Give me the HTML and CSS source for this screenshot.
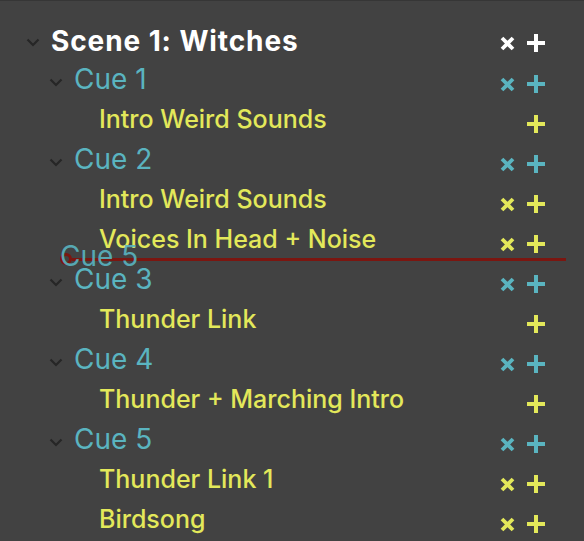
FILE: index.html
```html
<!DOCTYPE html>
<html>
<head>
<meta charset="utf-8">
<link rel="stylesheet" href="styles.css">
</head>
<body>
<div class="tree">
  <div class="row scene">
    <span class="chev"><svg width="14" height="9" viewBox="0 0 14 9"><path d="M1.5 1.5 L7 7 L12.5 1.5" fill="none" stroke="currentColor" stroke-width="2.2"/></svg></span>
    <span class="label">Scene 1: Witches</span>
    <span class="actions"><svg class="x" width="15" height="15" viewBox="0 0 15 15"><path d="M2 2 L13 13 M13 2 L2 13" stroke="currentColor" stroke-width="3.8"/></svg><svg class="p" width="18" height="18" viewBox="0 0 18 18"><path d="M9 0 V18 M0 9 H18" stroke="currentColor" stroke-width="4"/></svg></span>
  </div>

  <div class="row cue">
    <span class="chev"><svg width="14" height="9" viewBox="0 0 14 9"><path d="M1.5 1.5 L7 7 L12.5 1.5" fill="none" stroke="currentColor" stroke-width="2.2"/></svg></span>
    <span class="label">Cue 1</span>
    <span class="actions"><svg class="x" width="15" height="15" viewBox="0 0 15 15"><path d="M2 2 L13 13 M13 2 L2 13" stroke="currentColor" stroke-width="3.8"/></svg><svg class="p" width="18" height="18" viewBox="0 0 18 18"><path d="M9 0 V18 M0 9 H18" stroke="currentColor" stroke-width="4"/></svg></span>
  </div>
  <div class="row item">
    <span class="label">Intro Weird Sounds</span>
    <span class="actions"><svg class="p" width="18" height="18" viewBox="0 0 18 18"><path d="M9 0 V18 M0 9 H18" stroke="currentColor" stroke-width="4"/></svg></span>
  </div>

  <div class="row cue">
    <span class="chev"><svg width="14" height="9" viewBox="0 0 14 9"><path d="M1.5 1.5 L7 7 L12.5 1.5" fill="none" stroke="currentColor" stroke-width="2.2"/></svg></span>
    <span class="label">Cue 2</span>
    <span class="actions"><svg class="x" width="15" height="15" viewBox="0 0 15 15"><path d="M2 2 L13 13 M13 2 L2 13" stroke="currentColor" stroke-width="3.8"/></svg><svg class="p" width="18" height="18" viewBox="0 0 18 18"><path d="M9 0 V18 M0 9 H18" stroke="currentColor" stroke-width="4"/></svg></span>
  </div>
  <div class="row item">
    <span class="label">Intro Weird Sounds</span>
    <span class="actions"><svg class="x" width="15" height="15" viewBox="0 0 15 15"><path d="M2 2 L13 13 M13 2 L2 13" stroke="currentColor" stroke-width="3.8"/></svg><svg class="p" width="18" height="18" viewBox="0 0 18 18"><path d="M9 0 V18 M0 9 H18" stroke="currentColor" stroke-width="4"/></svg></span>
  </div>
  <div class="row item">
    <span class="label">Voices In Head + Noise</span>
    <span class="actions"><svg class="x" width="15" height="15" viewBox="0 0 15 15"><path d="M2 2 L13 13 M13 2 L2 13" stroke="currentColor" stroke-width="3.8"/></svg><svg class="p" width="18" height="18" viewBox="0 0 18 18"><path d="M9 0 V18 M0 9 H18" stroke="currentColor" stroke-width="4"/></svg></span>
  </div>

  <div class="row cue">
    <span class="chev"><svg width="14" height="9" viewBox="0 0 14 9"><path d="M1.5 1.5 L7 7 L12.5 1.5" fill="none" stroke="currentColor" stroke-width="2.2"/></svg></span>
    <span class="label">Cue 3</span>
    <span class="actions"><svg class="x" width="15" height="15" viewBox="0 0 15 15"><path d="M2 2 L13 13 M13 2 L2 13" stroke="currentColor" stroke-width="3.8"/></svg><svg class="p" width="18" height="18" viewBox="0 0 18 18"><path d="M9 0 V18 M0 9 H18" stroke="currentColor" stroke-width="4"/></svg></span>
  </div>
  <div class="row item">
    <span class="label">Thunder Link</span>
    <span class="actions"><svg class="p" width="18" height="18" viewBox="0 0 18 18"><path d="M9 0 V18 M0 9 H18" stroke="currentColor" stroke-width="4"/></svg></span>
  </div>

  <div class="row cue">
    <span class="chev"><svg width="14" height="9" viewBox="0 0 14 9"><path d="M1.5 1.5 L7 7 L12.5 1.5" fill="none" stroke="currentColor" stroke-width="2.2"/></svg></span>
    <span class="label">Cue 4</span>
    <span class="actions"><svg class="x" width="15" height="15" viewBox="0 0 15 15"><path d="M2 2 L13 13 M13 2 L2 13" stroke="currentColor" stroke-width="3.8"/></svg><svg class="p" width="18" height="18" viewBox="0 0 18 18"><path d="M9 0 V18 M0 9 H18" stroke="currentColor" stroke-width="4"/></svg></span>
  </div>
  <div class="row item">
    <span class="label">Thunder + Marching Intro</span>
    <span class="actions"><svg class="p" width="18" height="18" viewBox="0 0 18 18"><path d="M9 0 V18 M0 9 H18" stroke="currentColor" stroke-width="4"/></svg></span>
  </div>

  <div class="row cue">
    <span class="chev"><svg width="14" height="9" viewBox="0 0 14 9"><path d="M1.5 1.5 L7 7 L12.5 1.5" fill="none" stroke="currentColor" stroke-width="2.2"/></svg></span>
    <span class="label">Cue 5</span>
    <span class="actions"><svg class="x" width="15" height="15" viewBox="0 0 15 15"><path d="M2 2 L13 13 M13 2 L2 13" stroke="currentColor" stroke-width="3.8"/></svg><svg class="p" width="18" height="18" viewBox="0 0 18 18"><path d="M9 0 V18 M0 9 H18" stroke="currentColor" stroke-width="4"/></svg></span>
  </div>
  <div class="row item">
    <span class="label">Thunder Link 1</span>
    <span class="actions"><svg class="x" width="15" height="15" viewBox="0 0 15 15"><path d="M2 2 L13 13 M13 2 L2 13" stroke="currentColor" stroke-width="3.8"/></svg><svg class="p" width="18" height="18" viewBox="0 0 18 18"><path d="M9 0 V18 M0 9 H18" stroke="currentColor" stroke-width="4"/></svg></span>
  </div>
  <div class="row item">
    <span class="label">Birdsong</span>
    <span class="actions"><svg class="x" width="15" height="15" viewBox="0 0 15 15"><path d="M2 2 L13 13 M13 2 L2 13" stroke="currentColor" stroke-width="3.8"/></svg><svg class="p" width="18" height="18" viewBox="0 0 18 18"><path d="M9 0 V18 M0 9 H18" stroke="currentColor" stroke-width="4"/></svg></span>
  </div>

  <div class="drop-indicator"><span class="drop-dot"></span><span class="drop-line"></span></div>
  <div class="drag-ghost">Cue 5</div>
</div>
</body>
</html>
```

FILE: styles.css
```css
html, body {
  margin: 0;
  padding: 0;
  background: #424242;
  height: 100%;
}
body {
  border-top: 1px solid #363636;
  font-family: Inter, "Noto Sans", "Liberation Sans", sans-serif;
  overflow: hidden;
}
.tree {
  position: relative;
  padding: 18px 39px 0 26px;
}
.row {
  display: flex;
  align-items: center;
  height: 40px;
}
.chev {
  display: flex;
  align-items: center;
  width: 25px;
  flex: none;
  color: #262626;
  padding-top: 6px;
}
.label {
  flex: 1;
  white-space: nowrap;
}
.actions {
  display: flex;
  align-items: center;
  gap: 12px;
  color: inherit;
}
.actions svg { display: block; }
.scene {
  color: #ffffff;
  font-size: 28px;
  font-weight: 700;
  letter-spacing: 0.9px;
}
.scene .label { padding-top: 3px; }
.scene .actions { padding-top: 8px; }
.cue {
  color: #5ab4c0;
  font-size: 28px;
  font-weight: 400;
  padding-left: 23px;
}
.cue .actions { padding-top: 10px; }
.item {
  color: #e3e85a;
  font-size: 25px;
  font-weight: 500;
  padding-left: 73px;
}
.item .actions { padding-top: 10px; }
.drop-indicator {
  position: absolute;
  left: 60px;
  top: 252px;
  width: 506px;
  height: 12px;
  display: flex;
  align-items: center;
}
.drop-dot {
  width: 6px;
  height: 6px;
  border: 3px solid #7b1610;
  border-radius: 50%;
  flex: none;
}
.drop-line {
  flex: 1;
  height: 3px;
  background: #7b1610;
}
.drag-ghost {
  position: absolute;
  left: 60px;
  top: 238px;
  font-size: 28px;
  color: #5ab4c0;
  opacity: 0.9;
}
```
